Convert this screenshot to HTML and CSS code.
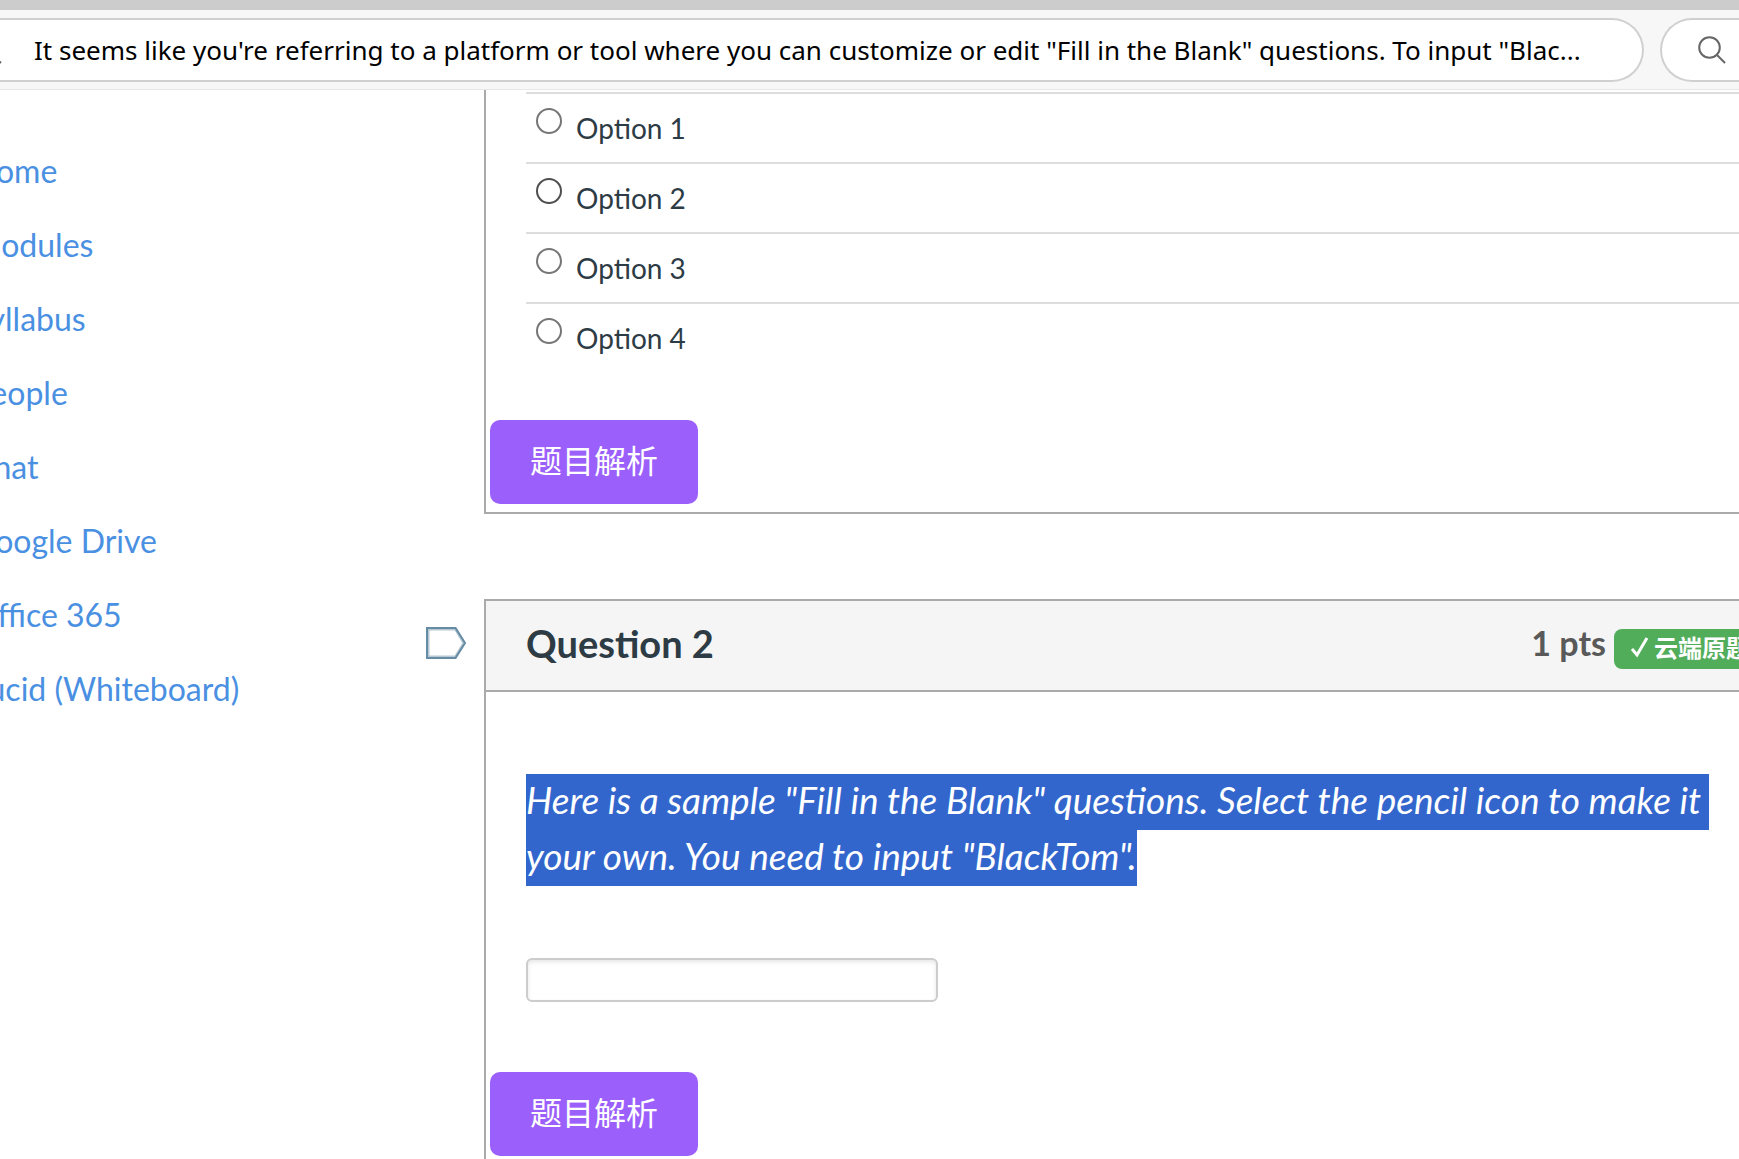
FILE: index.html
```html
<!DOCTYPE html>
<html lang="en">
<head>
<meta charset="utf-8">
<title>Quiz</title>
<link rel="stylesheet" href="styles.css">
</head>
<body>
<header class="toolbar">
  <label class="address">
    <svg class="glass" viewBox="0 0 28 28" aria-hidden="true"><circle cx="11.5" cy="11.5" r="10.3"/><path d="M19 19l8 8"/></svg>
    <input class="address-input" type="text" aria-label="Address" value="It seems like you're referring to a platform or tool where you can customize or edit &quot;Fill in the Blank&quot; questions. To input &quot;Blac...">
  </label>
  <button class="search" type="button" aria-label="Search">
    <svg class="glass" viewBox="0 0 28 28" aria-hidden="true"><circle cx="11.5" cy="11.5" r="10.3"/><path d="M19 19l8 8"/></svg>
  </button>
</header>
<div class="page">
  <nav class="course-nav">
    <a href="#">Home</a>
    <a href="#">Modules</a>
    <a href="#">Syllabus</a>
    <a href="#">People</a>
    <a href="#">Chat</a>
    <a href="#">Google Drive</a>
    <a href="#">Office 365</a>
    <a href="#">Lucid (Whiteboard)</a>
  </nav>
  <main class="quiz">
    <section class="question">
      <div class="card card-continued">
        <div class="answers">
          <label class="answer"><input type="radio" name="q1"><span>Option 1</span></label>
          <label class="answer"><input class="hovered" type="radio" name="q1"><span>Option 2</span></label>
          <label class="answer"><input type="radio" name="q1"><span>Option 3</span></label>
          <label class="answer"><input type="radio" name="q1"><span>Option 4</span></label>
        </div>
        <button class="explain" type="button">题目解析</button>
      </div>
    </section>
    <section class="question">
      <button class="flag" type="button" aria-label="Flag question">
        <svg viewBox="0 0 40 32" aria-hidden="true"><path class="flag-edge" d="M2 2h27.500l8.500 14-8.500 14H2z"/><path d="M1 1h28.500l9.500 15-9.500 15H1z"/></svg>
      </button>
      <div class="card">
        <div class="card-head">
          <h2>Question 2</h2>
          <span class="points">1 pts</span>
          <span class="badge"><svg viewBox="0 0 20 22" aria-hidden="true"><path d="M2 13l5 6L17 2"/></svg>云端原题</span>
        </div>
        <div class="card-body">
          <p class="prompt"><em>Here is a sample "Fill in the Blank" questions. Select the pencil icon to make it your own. You need to input "BlackTom".</em></p>
          <input class="blank" type="text" aria-label="Answer">
        </div>
        <button class="explain" type="button">题目解析</button>
      </div>
    </section>
  </main>
</div>
</body>
</html>
```
FILE: styles.css
```css
* { box-sizing: border-box; }

body {
  margin: 0;
  background: #fff;
  color: #2d3b45;
  font-family: Lato, "Noto Sans CJK SC", sans-serif;
  overflow: hidden;
}

button { font: inherit; cursor: pointer; }

.toolbar {
  display: flex;
  gap: 16px;
  height: 90px;
  padding-top: 8px;
  border-top: 10px solid #ccc;
  border-bottom: 1px solid #e8e8e8;
  background: #f7f7f7;
}

.address,
.search {
  display: flex;
  align-items: center;
  height: 64px;
  border: 2px solid #d0d0d0;
  background: #fff;
}

.address {
  flex: 1;
  gap: 32px;
  margin-left: -26px;
  border-left: 0;
  border-radius: 0 32px 32px 0;
}

.address-input {
  flex: 1;
  min-width: 0;
  padding: 0;
  border: 0;
  outline: 0;
  background: none;
  color: #000;
  font-family: "Noto Sans", sans-serif;
  font-size: 26px;
}

.search {
  width: 79px;
  padding: 0 0 0 36px;
  border-right: 0;
  border-radius: 32px 0 0 32px;
}

.glass {
  flex: none;
  width: 28px;
  height: 28px;
  fill: none;
  stroke: #666;
  stroke-width: 2;
}

.page {
  display: flex;
  align-items: flex-start;
}

.course-nav {
  display: flex;
  flex-direction: column;
  flex: none;
  width: 454px;
  margin-left: -28px;
  padding-top: 44px;
}

.course-nav a {
  color: #4a90e2;
  font-size: 32px;
  line-height: 74px;
  text-decoration: none;
}

.quiz {
  display: flex;
  flex: 1;
  flex-direction: column;
  gap: 85px;
  min-width: 0;
  margin-right: -80px;
}

.question {
  display: flex;
  align-items: flex-start;
  justify-content: flex-end;
}

.flag {
  width: 40px;
  height: 32px;
  margin: 28px 18px 0 0;
  padding: 0;
  border: 0;
  background: none;
}

.flag svg {
  display: block;
  fill: none;
  stroke: #668ca5;
  stroke-width: 2;
}

.flag .flag-edge {
  stroke: #b5c8d4;
  stroke-width: 3;
}

.card {
  flex: 1;
  min-width: 0;
  padding-bottom: 8px;
  border: 2px solid #aaa;
}

.card-continued {
  margin-left: 58px;
  padding-top: 2px;
  border-top: 0;
}

.answers { padding: 0 40px 44px; }

.answer {
  display: flex;
  gap: 14px;
  height: 70px;
  padding: 14px 0 0 10px;
  border-top: 2px solid #ddd;
  font-size: 28px;
  line-height: 41px;
}

.answer input {
  appearance: none;
  width: 26px;
  height: 26px;
  margin: 0;
  border: 2px solid #767676;
  border-radius: 50%;
  background: #fff;
}

.answer .hovered { border-color: #4f4f4f; }

.explain {
  display: block;
  height: 84px;
  margin: 4px 4px 0;
  padding: 0 40px 6px;
  border: 0;
  border-radius: 10px;
  background: #9b5ffc;
  color: #fff;
  font-size: 32px;
}

.card-head {
  display: flex;
  align-items: center;
  height: 91px;
  padding: 0 51px 0 40px;
  border-bottom: 2px solid #aaa;
  background: #f5f5f5;
}

.card-head h2 {
  flex: 1;
  margin: 0;
  padding-bottom: 6px;
  font-size: 38px;
  line-height: 56px;
}

.points {
  margin-right: 8px;
  padding-bottom: 6px;
  color: #595959;
  font-size: 34px;
  font-weight: bold;
}

.badge {
  display: flex;
  align-items: center;
  gap: 4px;
  height: 40px;
  margin-top: 6px;
  padding: 0 16px 4px;
  border-radius: 8px;
  background: #52ad5b;
  color: #fff;
  font-size: 24px;
  font-weight: bold;
  white-space: nowrap;
}

.badge svg {
  width: 20px;
  height: 22px;
  fill: none;
  stroke: #fff;
  stroke-width: 3;
}

.card-body { padding: 80px 40px 66px; }

.prompt {
  margin: 0 0 74px;
  font-size: 37px;
  line-height: 56px;
  white-space: pre-wrap;
}

.prompt em {
  padding: 3px 0 8px;
  background: #3266cd;
  color: #fff;
}

.blank {
  display: block;
  width: 412px;
  height: 44px;
  padding: 0 12px;
  border: 2px solid #ccc;
  border-radius: 6px;
  box-shadow: inset 0 2px 4px #0000001a;
  font: inherit;
  font-size: 28px;
}
```
